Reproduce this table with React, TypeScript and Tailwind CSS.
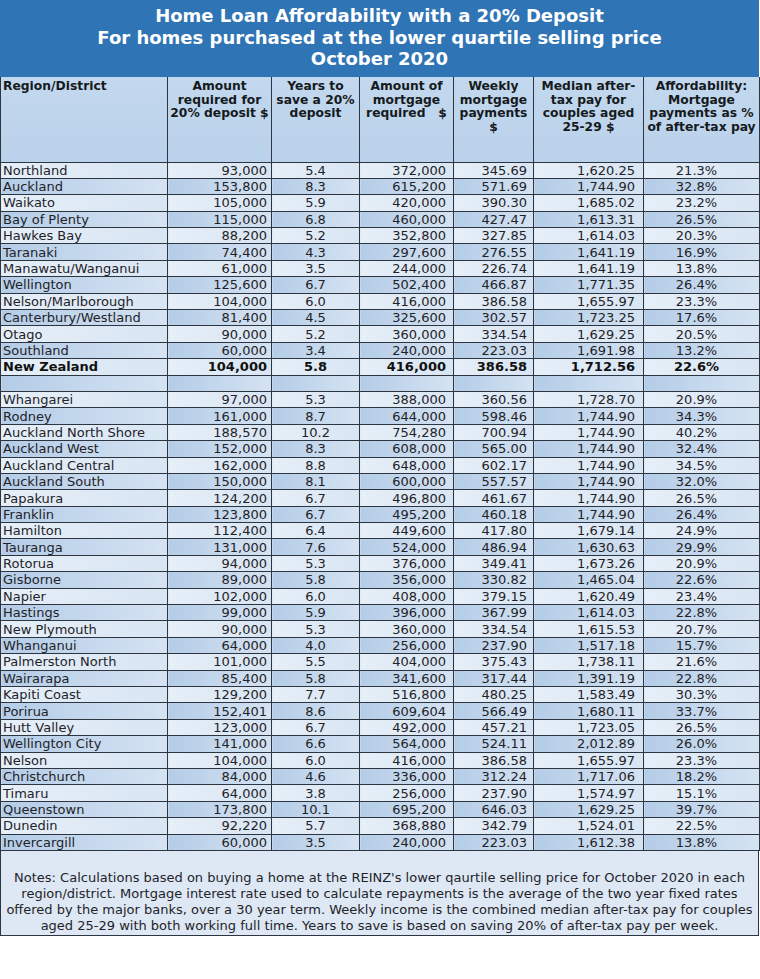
import React from 'react';

type Row = [string, string, string, string, string, string, string];

const regions: Row[] = [
  ['Northland', '93,000', '5.4', '372,000', '345.69', '1,620.25', '21.3%'],
  ['Auckland', '153,800', '8.3', '615,200', '571.69', '1,744.90', '32.8%'],
  ['Waikato', '105,000', '5.9', '420,000', '390.30', '1,685.02', '23.2%'],
  ['Bay of Plenty', '115,000', '6.8', '460,000', '427.47', '1,613.31', '26.5%'],
  ['Hawkes Bay', '88,200', '5.2', '352,800', '327.85', '1,614.03', '20.3%'],
  ['Taranaki', '74,400', '4.3', '297,600', '276.55', '1,641.19', '16.9%'],
  ['Manawatu/Wanganui', '61,000', '3.5', '244,000', '226.74', '1,641.19', '13.8%'],
  ['Wellington', '125,600', '6.7', '502,400', '466.87', '1,771.35', '26.4%'],
  ['Nelson/Marlborough', '104,000', '6.0', '416,000', '386.58', '1,655.97', '23.3%'],
  ['Canterbury/Westland', '81,400', '4.5', '325,600', '302.57', '1,723.25', '17.6%'],
  ['Otago', '90,000', '5.2', '360,000', '334.54', '1,629.25', '20.5%'],
  ['Southland', '60,000', '3.4', '240,000', '223.03', '1,691.98', '13.2%'],
];

const nz: Row = ['New Zealand', '104,000', '5.8', '416,000', '386.58', '1,712.56', '22.6%'];

const districts: Row[] = [
  ['Whangarei', '97,000', '5.3', '388,000', '360.56', '1,728.70', '20.9%'],
  ['Rodney', '161,000', '8.7', '644,000', '598.46', '1,744.90', '34.3%'],
  ['Auckland North Shore', '188,570', '10.2', '754,280', '700.94', '1,744.90', '40.2%'],
  ['Auckland West', '152,000', '8.3', '608,000', '565.00', '1,744.90', '32.4%'],
  ['Auckland Central', '162,000', '8.8', '648,000', '602.17', '1,744.90', '34.5%'],
  ['Auckland South', '150,000', '8.1', '600,000', '557.57', '1,744.90', '32.0%'],
  ['Papakura', '124,200', '6.7', '496,800', '461.67', '1,744.90', '26.5%'],
  ['Franklin', '123,800', '6.7', '495,200', '460.18', '1,744.90', '26.4%'],
  ['Hamilton', '112,400', '6.4', '449,600', '417.80', '1,679.14', '24.9%'],
  ['Tauranga', '131,000', '7.6', '524,000', '486.94', '1,630.63', '29.9%'],
  ['Rotorua', '94,000', '5.3', '376,000', '349.41', '1,673.26', '20.9%'],
  ['Gisborne', '89,000', '5.8', '356,000', '330.82', '1,465.04', '22.6%'],
  ['Napier', '102,000', '6.0', '408,000', '379.15', '1,620.49', '23.4%'],
  ['Hastings', '99,000', '5.9', '396,000', '367.99', '1,614.03', '22.8%'],
  ['New Plymouth', '90,000', '5.3', '360,000', '334.54', '1,615.53', '20.7%'],
  ['Whanganui', '64,000', '4.0', '256,000', '237.90', '1,517.18', '15.7%'],
  ['Palmerston North', '101,000', '5.5', '404,000', '375.43', '1,738.11', '21.6%'],
  ['Wairarapa', '85,400', '5.8', '341,600', '317.44', '1,391.19', '22.8%'],
  ['Kapiti Coast', '129,200', '7.7', '516,800', '480.25', '1,583.49', '30.3%'],
  ['Porirua', '152,401', '8.6', '609,604', '566.49', '1,680.11', '33.7%'],
  ['Hutt Valley', '123,000', '6.7', '492,000', '457.21', '1,723.05', '26.5%'],
  ['Wellington City', '141,000', '6.6', '564,000', '524.11', '2,012.89', '26.0%'],
  ['Nelson', '104,000', '6.0', '416,000', '386.58', '1,655.97', '23.3%'],
  ['Christchurch', '84,000', '4.6', '336,000', '312.24', '1,717.06', '18.2%'],
  ['Timaru', '64,000', '3.8', '256,000', '237.90', '1,574.97', '15.1%'],
  ['Queenstown', '173,800', '10.1', '695,200', '646.03', '1,629.25', '39.7%'],
  ['Dunedin', '92,220', '5.7', '368,880', '342.79', '1,524.01', '22.5%'],
  ['Invercargill', '60,000', '3.5', '240,000', '223.03', '1,612.38', '13.8%'],
];

const headers = [
  'Amount required for 20% deposit $',
  'Years to save a 20% deposit',
  'Amount of mortgage required   $',
  'Weekly mortgage payments $',
  'Median after-tax pay for couples aged 25-29 $',
  'Affordability: Mortgage payments as % of after-tax pay',
];

const align = ['text-left pl-[2px]', 'text-right pr-[4px]', 'text-center', 'text-right pr-[7px]', 'text-right pr-[6px]', 'text-right pr-[8px]', 'text-center pr-[10px]'];

const light = 'bg-linear-to-r from-[#e6eff8] to-[#d8e5f3]';
const dark = 'bg-linear-to-r from-[#b4cce7] to-[#d5e3f2]';

const DataRow = ({ row, idx, bold }: { row: Row | null; idx: number; bold?: boolean }) => (
  <tr className="h-[16.4px]">
    {(row ?? ['', '', '', '', '', '', '']).map((v, i) => (
      <td
        key={i}
        className={`border-x border-b border-[#2d3540] p-0 leading-[15px] whitespace-nowrap ${align[i]} ${idx % 2 === 0 ? light : dark} ${bold ? 'font-bold text-[#111]' : ''}`}
      >
        {v}
      </td>
    ))}
  </tr>
);

export default function App() {
  const rows: { row: Row | null; bold?: boolean }[] = [
    ...regions.map((r) => ({ row: r })),
    { row: nz, bold: true },
    { row: null },
    ...districts.map((r) => ({ row: r })),
  ];

  return (
    <div className="w-[760px] bg-white font-['DejaVu_Sans',sans-serif] text-[#1f2328]">
      <div className="w-[759px] bg-[#2f74b5] pt-[5px] h-[77px] text-center text-white font-bold text-[18px] leading-[21.5px]">
        <div>Home Loan Affordability with a 20% Deposit</div>
        <div>For homes purchased at the lower quartile selling price</div>
        <div>October 2020</div>
      </div>
      <table className="w-[759px] table-fixed border-collapse text-[13px]">
        <colgroup>
          <col className="w-[167px]" />
          <col className="w-[104px]" />
          <col className="w-[88px]" />
          <col className="w-[94px]" />
          <col className="w-[80px]" />
          <col className="w-[110px]" />
          <col className="w-[116px]" />
        </colgroup>
        <thead>
          <tr className="h-[85px]">
            <th className="border-x border-b border-[#2d3540] bg-linear-to-b from-[#c3d8ee] to-[#b9d1ea] align-top text-left pl-[2px] pt-[3px] text-[12.3px] leading-[13.7px] font-bold text-[#151a20]">
              Region/District
            </th>
            {headers.map((h) => (
              <th
                key={h}
                className="border-x border-b border-[#2d3540] bg-linear-to-b from-[#c3d8ee] to-[#b9d1ea] align-top text-center px-[1px] pt-[3px] text-[12.3px] leading-[13.7px] font-bold text-[#151a20] whitespace-pre-wrap"
              >
                {h}
              </th>
            ))}
          </tr>
        </thead>
        <tbody>
          {rows.map((r, i) => (
            <DataRow key={i} row={r.row} idx={i} bold={r.bold} />
          ))}
        </tbody>
      </table>
      <div className="w-[759px] border-x border-b border-[#2d3540] bg-[#dde8f4] pt-[19px] pb-[1px] text-center text-[13px] leading-[16px] text-[#1f2328]">
        Notes: Calculations based on buying a home at the REINZ's lower qaurtile selling price for October 2020 in each
        region/district. Mortgage interest rate used to calculate repayments is the average of the two year fixed rates
        offered by the major banks, over a 30 year term. Weekly income is the combined median after-tax pay for couples
        aged 25-29 with both working full time. Years to save is based on saving 20% of after-tax pay per week.
      </div>
    </div>
  );
}
